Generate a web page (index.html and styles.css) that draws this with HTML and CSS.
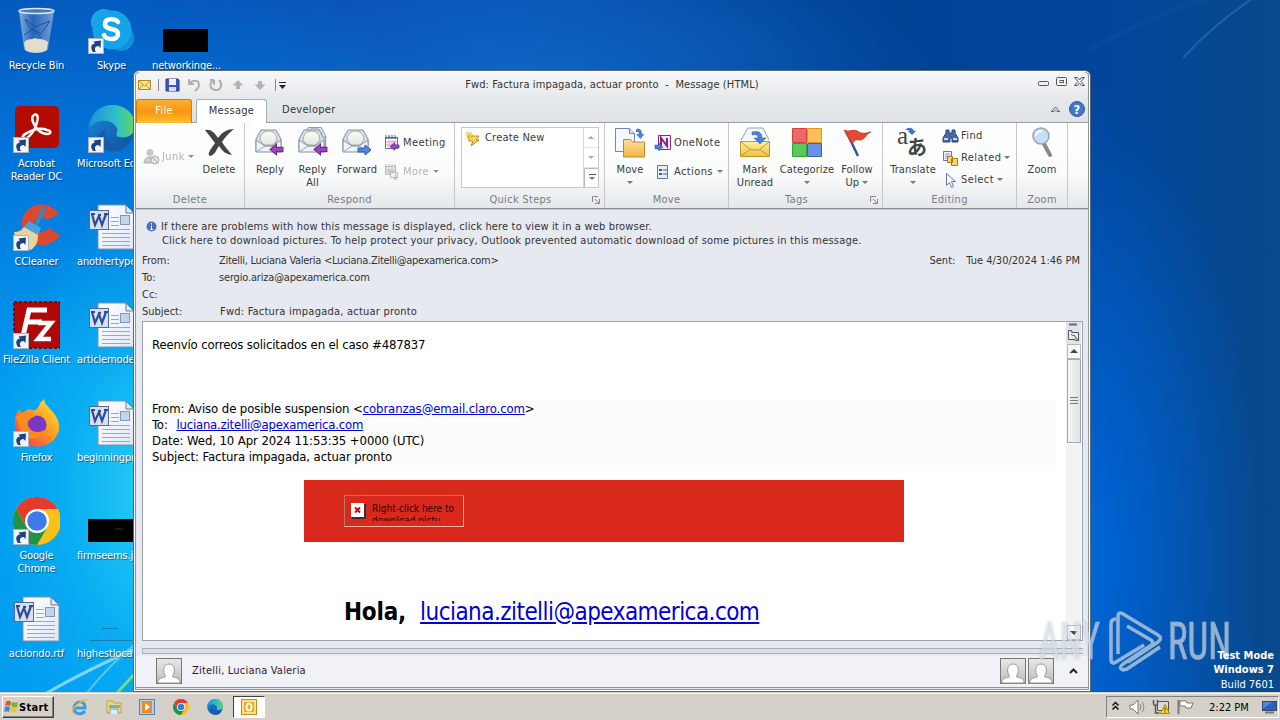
FILE: index.html
```html
<!DOCTYPE html>
<html lang="en">
<head>
  <meta charset="UTF-8" />
  <meta name="viewport" content="width=device-width, initial-scale=1.0"/>
  <title>Fwd: Factura impagada, actuar pronto - Message (HTML)</title>
  <link rel="stylesheet" href="styles.css">
</head>
<body>

  <!-- Shared icons -->
  <svg class="defs" width="0" height="0">
    <defs>
      <linearGradient id="g-env" x1="0" y1="0" x2="0" y2="1"><stop offset="0" stop-color="#fffdf0"/><stop offset="1" stop-color="#dfe6ea"/></linearGradient>
      <linearGradient id="g-gold" x1="0" y1="0" x2="0" y2="1"><stop offset="0" stop-color="#fff0a0"/><stop offset="1" stop-color="#f0c040"/></linearGradient>
      <linearGradient id="g-folder" x1="0" y1="0" x2="0" y2="1"><stop offset="0" stop-color="#ffe0a0"/><stop offset="1" stop-color="#f2b440"/></linearGradient>
      <linearGradient id="g-edge" x1="0" y1="0" x2="1" y2="0"><stop offset="0" stop-color="#1f8fe0"/><stop offset=".6" stop-color="#2fc0c8"/><stop offset="1" stop-color="#5fd860"/></linearGradient>
      <linearGradient id="g-edge2" x1="0" y1="0" x2="1" y2="1"><stop offset="0" stop-color="#1a88d8"/><stop offset="1" stop-color="#10509c"/></linearGradient>
      <linearGradient id="g-fox" x1="1" y1="0" x2="0" y2="1"><stop offset="0" stop-color="#fff040"/><stop offset=".45" stop-color="#ff9a20"/><stop offset="1" stop-color="#f02858"/></linearGradient>
      <linearGradient id="g-bin" x1="0" y1="0" x2="1" y2="0"><stop offset="0" stop-color="#9fc0e4"/><stop offset=".4" stop-color="#2f66b8"/><stop offset="1" stop-color="#8fb0dc"/></linearGradient>
      <linearGradient id="g-page" x1="0" y1="0" x2="1" y2="1"><stop offset="0" stop-color="#fff"/><stop offset="1" stop-color="#dfe8f8"/></linearGradient>
      <linearGradient id="g-person" x1="0" y1="0" x2="0" y2="1"><stop offset="0" stop-color="#e8e8e8"/><stop offset="1" stop-color="#bcbcbc"/></linearGradient>
      <symbol id="shortcut" viewBox="0 0 16 16">
        <rect x=".5" y=".5" width="15" height="15" fill="#f2f5f8" stroke="#a8b4c0"/>
        <path d="M5 14C2 10 3 6 7 5.500L5.500 3.500 13 2.500 12.500 10 10.500 8C7 8 6 11 8 14Z" fill="#1c4480"/>
      </symbol>
      <symbol id="word" viewBox="0 0 48 48">
        <path d="M11 2h28l8 8v36H11z" fill="url(#g-page)" stroke="#8090b0"/>
        <path d="M39 2v8h8z" fill="#dfe8f4" stroke="#6078a8"/>
        <path d="M24 14.500h8M24 18.500h8M24 22.500h8M15 26.500h28M15 30.500h28M15 34.500h28M15 38.500h28M15 42.500h28" stroke="#8fa8d8"/>
        <rect x="33.500" y="12.500" width="9" height="9" fill="#c4d4e8" stroke="#8098c0"/>
        <rect x="2.500" y="7.500" width="19" height="19" fill="#d8e0f0" stroke="#4f68a8"/>
        <path d="M5 11l3 11 4-9 3 9 4-11M4 11h4M17 11h4M11 12h3" fill="none" stroke="#2c4c98" stroke-width="2.200"/>
      </symbol>
      <symbol id="chrome" viewBox="0 0 48 48">
        <circle cx="24" cy="24" r="24" fill="#fbc116"/>
        <path d="M3.200 12A24 24 0 0 1 44.800 12H24L14 30z" fill="#e33b2e"/>
        <path d="M3.200 12A24 24 0 0 0 24 48L34.500 30H13.600z" fill="#229342"/>
        <circle cx="24" cy="24" r="12" fill="#fff"/>
        <circle cx="24" cy="24" r="9.800" fill="#3c7be8"/>
      </symbol>
      <symbol id="edge" viewBox="0 0 48 48">
        <circle cx="24" cy="24" r="23.500" fill="url(#g-edge2)"/>
        <path d="M1 23C3 8 12 0 25 0c14 0 23 10 23 21 0 9-7 13-15 12-5-1-4-3-3-7C30 18 14 10 1 23z" fill="url(#g-edge)"/>
        <path d="M18 25c-2 12 9 22 24 14-7 10-20 11-28 4-7-8-4-16 4-18z" fill="#175ca8"/>
      </symbol>
      <symbol id="envelope" viewBox="0 0 32 32">
        <path d="M2 13L7 4h15l5 9v12H2z" fill="#d8e2ee" stroke="#7f90a8"/>
        <path d="M6 14c0-12 17-12 17 0l-4 5h-9z" fill="url(#g-env)" stroke="#a8a890"/>
        <path d="M2 14l9 6h7l9-6v12H2z" fill="#edf3f7" stroke="#7f90a8"/>
        <path d="M2 26l9-6h7l9 6" fill="none" stroke="#98a8b8"/>
      </symbol>
      <symbol id="arrow-left" viewBox="0 0 14 12"><path d="M1 6l6-5v3h6v4H7v3z" fill="#9a48b8" stroke="#70288c"/></symbol>
      <symbol id="person" viewBox="0 0 26 26">
        <rect x=".5" y=".5" width="25" height="25" fill="url(#g-person)" stroke="#777"/>
        <path d="M2 25c0-5 3-5 7-6 1-1 0-2-1-4-3-12 13-12 10 0-1 2-2 3-1 4 4 1 7 1 7 6z" fill="#fff" stroke="#999"/>
      </symbol>
      <symbol id="launcher" viewBox="0 0 8 8"><path d="M.5 6V.5H6M3 3l4 4M7.500 3v4.500H3" fill="none" stroke="#888"/></symbol>
    </defs>
  </svg>

  <div class="screen">

    <!-- Wallpaper light streaks -->
    <svg class="wallpaper" width="1280" height="694">
      <g fill="none" stroke-linecap="round">
        <path d="M45 694Q90 668 140 647" stroke="#a8e4fa" stroke-width="3" opacity=".75"/>
        <path d="M86 694Q110 664 140 640" stroke="#8fdcf8" stroke-width="2" opacity=".6"/>
        <path d="M116 694L140 668" stroke="#90e860" stroke-width="3" opacity=".8"/>
        <path d="M1184 57Q1210 28 1250 0" stroke="#4f94d4" stroke-width="2" opacity=".35"/>
        <path d="M1090 50Q1150 15 1205 0" stroke="#4f94d4" stroke-width="5" opacity=".05"/>
      </g>
    </svg>

    <!-- Desktop icons -->
    <div class="desktop">
      <div class="shortcut">
        <svg width="48" height="48"><path d="M7 4l5 38c6 4 18 4 24 0l6-38z" fill="url(#g-bin)" opacity=".8"/><path d="M12 36c2-5 8-3 11-5 4 2 9 0 13 4l-1 7c-6 4-16 4-22 0z" fill="#e4dccc"/><path d="M13 12l10 8 15-6-9 13-12-7zM12 28l9-6 8 9" fill="none" stroke="#214f9c"/><ellipse cx="24.500" cy="4" rx="17.500" ry="2.500" fill="#4878b8" stroke="#dce4ec" stroke-width="1.500"/><path d="M13 42c6 4 16 4 22 0" fill="none" stroke="#d8d8d8" stroke-width="2"/></svg>
        <span>Recycle Bin</span>
      </div>
      <div class="shortcut">
        <svg width="48" height="48"><rect x="3" y="1" width="44" height="42" rx="5" fill="#b30b00"/><path d="M22 10c3-2 5 2 3 7-1 7-7 15-12 17-4 1-3-4 2-6 7-4 15-5 20-3 5 1 4 4 0 4-6 0-12-6-14-12-1-3-1-6 1-7z" fill="none" stroke="#fff" stroke-width="2.500"/><use href="#shortcut" x="1" y="32" width="16" height="16"/></svg>
        <span>Acrobat<br>Reader DC</span>
      </div>
      <div class="shortcut">
        <svg width="48" height="48"><path d="M47 11C36-6 9 1 10 22c1 22 27 27 38 10l-11-7c-8 8-16 3-15-4 1-8 9-9 13-4z" fill="#dc4930"/><path d="M32 5l-8 18" stroke="#3688c4" stroke-width="4"/><path d="M17 18l12 7-3 8-15-8z" fill="#4ba0d8"/><path d="M12 24l14 8c0 8-2 11-7 15C9 44 3 36 2 29c5 0 7-1 10-5z" fill="#ecd29c"/><use href="#shortcut" x="1" y="32" width="16" height="16"/></svg>
        <span>CCleaner</span>
      </div>
      <div class="shortcut">
        <svg width="48" height="48"><rect x="2" y="1" width="46" height="46" fill="#b00808" stroke="#780808" stroke-width="2" stroke-dasharray="3 2"/><path d="M11 35l6-26h18M14 21h16" fill="none" stroke="#fff" stroke-width="5"/><path d="M26 22h13L26 38h13" fill="none" stroke="#fff" stroke-width="4.500"/><use href="#shortcut" x="1" y="32" width="16" height="16"/></svg>
        <span>FileZilla Client</span>
      </div>
      <div class="shortcut">
        <svg width="48" height="48"><path d="M3 22c0-6 2-9 5-12l1 4 8-4c5 3 9 1 11-6l4-4c1 6 4 7 7 11 10 10 9 20 6 25-7 14-27 15-36 5C4 36 2 30 3 22z" fill="url(#g-fox)"/><circle cx="25" cy="26" r="9.500" fill="#7a38c4"/><path d="M4 18c7-5 15-4 19 0-5 0-4 3-8 4 1 11 10 14 20 8-5 13-23 13-27 0z" fill="#ff8a20"/><use href="#shortcut" x="1" y="32" width="16" height="16"/></svg>
        <span>Firefox</span>
      </div>
      <div class="shortcut">
        <svg width="48" height="48"><use href="#chrome" x="1" y="0" width="48" height="48"/><use href="#shortcut" x="1" y="32" width="16" height="16"/></svg>
        <span>Google<br>Chrome</span>
      </div>
      <div class="shortcut">
        <svg width="48" height="48"><use href="#word" width="48" height="48"/></svg>
        <span>actiondo.rtf</span>
      </div>

      <div class="shortcut">
        <svg width="48" height="48"><circle cx="17" cy="15" r="13" fill="#1fa4e4"/><circle cx="34" cy="31" r="13" fill="#1090d8"/><circle cx="25" cy="23" r="19.500" fill="#14a5e8"/><path d="M31 15c-3-4-13-4-13 2 0 7 13 3 13 10 0 7-12 6-14 1" fill="none" stroke="#fff" stroke-width="4.500" stroke-linecap="round"/><use href="#shortcut" x="1" y="31" width="16" height="16"/></svg>
        <span>Skype</span>
      </div>
      <div class="shortcut left">
        <svg width="48" height="48"><use href="#edge" x="1" y="0" width="47" height="47"/><use href="#shortcut" x="1" y="32" width="16" height="16"/></svg>
        <span>Microsoft Edge</span>
      </div>
      <div class="shortcut left">
        <svg width="48" height="48"><use href="#word" width="48" height="48"/></svg>
        <span>anothertype...</span>
      </div>
      <div class="shortcut left">
        <svg width="48" height="48"><use href="#word" width="48" height="48"/></svg>
        <span>articlemode...</span>
      </div>
      <div class="shortcut left">
        <svg width="48" height="48"><use href="#word" width="48" height="48"/></svg>
        <span>beginningpr...</span>
      </div>
      <div class="shortcut left">
        <svg width="48" height="48"><path d="M1 22h46v23H1z"/><path d="M28 32h8" stroke="#333"/></svg>
        <span>firmseems.jpg</span>
      </div>
      <div class="shortcut left">
        <svg width="48" height="48"><path d="M3 45.500h44M15 33.500h16" stroke="#1c6c94" opacity=".7"/></svg>
        <span>highestlocal...</span>
      </div>

      <div class="shortcut">
        <svg width="48" height="48"><path d="M1 22h45v23H1z"/></svg>
        <span>networkinge...</span>
      </div>
    </div>

    <div class="build">
      <b>Test Mode</b>
      <b>Windows 7</b>
      <span>Build 7601</span>
    </div>

    <!-- Message window -->
    <div class="window">
      <div class="titlebar">
        <div class="quick-access">
          <svg width="150" height="18">
            <path d="M2.500 5.500h12v9h-12z" fill="#fbe48c" stroke="#b08828"/><path d="M3 6l5.500 5L14 6M3 14l4-4M14 14l-4-4" fill="none" stroke="#c09830"/>
            <path d="M22.500 4v12" stroke="#888"/>
            <path d="M30 4h12l1 1v11H30z" fill="#3f58b8" stroke="#283c90"/><path d="M33 4h7v6h-7z" fill="#eef2ff"/><path d="M33 12h7v4h-7z" fill="#d8dce8"/>
            <path d="M53 4v5h5M53 9c4-5 10-4 10 1 0 3-2 4-4 6" fill="none" stroke="#b0b0b0" stroke-width="2"/>
            <path d="M77 5c-5 5-2 10 3 10s7-6 3-10M78 5h-4M78 5v5" fill="none" stroke="#b0b0b0" stroke-width="2"/>
            <path d="M102 5l5.500 5.500H104V14h-4v-3.500h-3.500z" fill="#b4b4b4"/><path d="M124 15l5.500-5.500H126V6h-4v3.500h-3.500z" fill="#b4b4b4"/>
            <path d="M139.500 4v12" stroke="#888"/><path d="M143 7.500h7" stroke="#222"/><path d="M143 10h7l-3.500 4z" fill="#222"/>
          </svg>
        </div>
        <div class="title">Fwd: Factura impagada, actuar pronto&nbsp; -&nbsp; Message (HTML)</div>
        <div class="window-buttons">
          <svg width="50" height="14" fill="none" stroke="#555">
            <rect x="1.500" y="6.500" width="10" height="4" rx="1"/>
            <rect x="19.500" y="2.500" width="10" height="8" rx="1"/><rect x="23" y="5.500" width="3.500" height="2"/>
            <path d="M37.500 2.500h3l2 2.500 2-2.500h3l-3.500 4 3.500 4h-3l-2-2.500-2 2.500h-3l3.500-4z"/>
          </svg>
        </div>
      </div>

      <div class="tabs">
        <div class="tab file">File</div>
        <div class="tab active">Message</div>
        <div class="tab">Developer</div>
        <svg class="help" width="40" height="20">
          <path d="M6.500 12.500L10.500 8l4 4.500h-2L10.500 11l-2 1.500z" fill="#fff" stroke="#555"/>
          <circle cx="32" cy="10" r="7.500" fill="#4676c8" stroke="#2f58a4"/>
          <text x="32" y="15" text-anchor="middle" class="help-mark">?</text>
        </svg>
      </div>

      <div class="ribbon">
        <div class="group delete">
          <div class="group-body">
            <div class="small-col">
              <div class="small disabled"><svg width="18" height="17"><circle cx="7" cy="4.500" r="3.500" fill="#bbb"/><path d="M1 15c0-8 12-8 12 0z" fill="#c4c4c4" stroke="#999"/><circle cx="12" cy="12" r="4" fill="#ddd" stroke="#999"/><path d="M9 9l6 6" stroke="#999"/></svg>Junk<i class="arrow"></i></div>
            </div>
            <div class="big">
              <svg width="32" height="32"><path d="M2 4c6-1 9 2 13 8 4-6 10-9 16-9-5 4-9 8-12 13 3 5 6 8 10 13-6-1-9-3-13-9-3 4-4 9-9 10-4-2 2-8 5-13C8 12 6 9 2 4z" fill="#444"/></svg>
              <span>Delete</span>
            </div>
          </div>
          <div class="group-label">Delete</div>
        </div>

        <div class="group respond">
          <div class="group-body">
            <div class="big">
              <svg width="32" height="32"><use href="#envelope" width="32" height="32"/><use href="#arrow-left" x="15" y="17" width="15" height="13"/></svg>
              <span>Reply</span>
            </div>
            <div class="big">
              <svg width="32" height="32"><use href="#envelope" x="5" y="-2" width="28" height="28"/><use href="#envelope" width="32" height="32"/><use href="#arrow-left" x="16" y="17" width="15" height="13"/></svg>
              <span>Reply<br>All</span>
            </div>
            <div class="big">
              <svg width="32" height="32"><use href="#envelope" width="32" height="32"/><path d="M30 24l-6-5v3h-7v4h7v3z" fill="#4c88e0" stroke="#285cb0"/></svg>
              <span>Forward</span>
            </div>
            <div class="small-col">
              <div class="small"><svg width="18" height="18"><path d="M2.500 3.500h12v11h-12z" fill="#fff" stroke="#5570b8"/><path d="M2 4h13M3 1v4M6 1v4M9 1v4M12 1v4" stroke="#4060a8"/><path d="M3 8h11M3 11h11M6 6v8M9 6v8M12 6v8" stroke="#d8a0b8"/><use href="#arrow-left" x="6" y="8" width="11" height="9"/></svg>Meeting</div>
              <div class="small disabled"><svg width="18" height="18"><path d="M2.500 3.500h10v8h-10z" fill="#eee" stroke="#aaa"/><path d="M3 1v4M6 1v4M9 1v4M12 1v4M3 7h9M3 9h9M6 5v7M9 5v7" stroke="#aaa"/><path d="M7.500 9.500h7v5h-7zM12.500 11v6M9.500 14l3 3 3-3" fill="#eee" stroke="#aaa"/></svg>More<i class="arrow"></i></div>
            </div>
          </div>
          <div class="group-label">Respond</div>
        </div>

        <div class="group quick-steps">
          <div class="group-body">
            <div class="gallery">
              <div class="gallery-item"><svg width="16" height="16"><path d="M3 5h11l-3 4h3l-8 6 2-5H4z" fill="#f8d860" stroke="#b88820"/><path d="M4 0v8M0 4h8M1 1l6 6M7 1L1 7" stroke="#f0c020"/></svg>Create New</div>
              <div class="gallery-scroll"><div><i class="arrow up"></i></div><div><i class="arrow dim"></i></div><div class="more"><i class="arrow bar"></i></div></div>
            </div>
          </div>
          <div class="group-label">Quick Steps<svg class="launch" width="8" height="8"><use href="#launcher" width="8" height="8"/></svg></div>
        </div>

        <div class="group move">
          <div class="group-body">
            <div class="big">
              <svg width="32" height="32"><path d="M1.500 2.500h14l5 5v18h-19z" fill="#f4f8ff" stroke="#7088b8"/><path d="M15.500 2.500v5h5" fill="#d8e4f4" stroke="#7088b8"/><path d="M9.500 13.500h7l2 2.500h12v15h-21z" fill="url(#g-folder)" stroke="#c08830"/><path d="M22 3c5-1 6 2 6 5h2.500L26.500 13 22 8h3c0-2-1-2-3-2z" fill="#4c80d8"/></svg>
              <span>Move<br><i class="arrow"></i></span>
            </div>
            <div class="small-col">
              <div class="small"><svg width="18" height="18"><path d="M4.500 1.500h12v14h-12z" fill="#f4e8f4" stroke="#84288c"/><path d="M7 12V4l6 8V4" fill="none" stroke="#80287c" stroke-width="2"/><path d="M1 11h4V9l4 4-4 4v-2H1z" fill="#4c80d8" stroke="#2c58a8" stroke-width=".5"/></svg>OneNote</div>
              <div class="small"><svg width="18" height="18"><path d="M3.500 2.500h10v13h-10z" fill="#e8f0fa" stroke="#5878a8"/><path d="M5 6h3v2H5zM5 10h3v2H5z" fill="#405888"/><path d="M9 7h4M9 11h4" stroke="#405888"/></svg>Actions<i class="arrow"></i></div>
            </div>
          </div>
          <div class="group-label">Move</div>
        </div>

        <div class="group tags">
          <div class="group-body">
            <div class="big">
              <svg width="32" height="32"><path d="M2 14L9 2h15l6 12" fill="#f4f8fc" stroke="#90a0b8"/><path d="M1.500 15.500h29v15h-29z" fill="url(#g-gold)" stroke="#c09828"/><path d="M2 16l10 8h8l10-8M2 30l10-7M30 30l-10-7" fill="none" stroke="#c09828"/><path d="M13 6c8-2 10 2 10 6h4l-6 6-6-6h4c0-3-2-4-6-3z" fill="#4c80d8" stroke="#2c58a8" stroke-width=".5"/></svg>
              <span>Mark<br>Unread</span>
            </div>
            <div class="big">
              <svg width="32" height="32"><path d="M1.500 2.500h14v14h-14z" fill="#ee6868" stroke="#d04040"/><path d="M16.500 2.500h14v14h-14z" fill="#fcc058" stroke="#dc9828"/><path d="M1.500 17.500h14v13h-14z" fill="#5cc85c" stroke="#38a038"/><path d="M16.500 17.500h14v13h-14z" fill="#6890e4" stroke="#3c60b8"/></svg>
              <span>Categorize<br><i class="arrow"></i></span>
            </div>
            <div class="big">
              <svg width="32" height="32"><path d="M5 5l12 25" stroke="#305898" stroke-width="2.500"/><path d="M3 4c6 3 9-2 15 2 3 2 7 1 12 0-6 2-6 9-12 8-4-1-5 1-7 4z" fill="#e84830" stroke="#b82c18" stroke-width=".7"/></svg>
              <span>Follow<br>Up <i class="arrow"></i></span>
            </div>
          </div>
          <div class="group-label">Tags<svg class="launch" width="8" height="8"><use href="#launcher" width="8" height="8"/></svg></div>
        </div>

        <div class="group editing">
          <div class="group-body">
            <div class="big">
              <svg class="translate" width="34" height="32"><text x="1" y="18" class="tr-latin">a</text><text x="11" y="29" class="tr-kana">あ</text><path d="M9 4c4-4 8-2 9 1h2l-4 4-4-4h2c-1-1-3-1-5-1z" fill="#3c70c8"/></svg>
              <span>Translate<br><i class="arrow"></i></span>
            </div>
            <div class="small-col three">
              <div class="small"><svg width="18" height="16"><path d="M4 2h3v3h3V2h3v3l3 5v4h-6v-4H8v4H1v-4l3-5z" fill="#4468a8" stroke="#284878"/><path d="M2 11h4M11 11h4" stroke="#c8d8f0" stroke-width="2"/></svg>Find</div>
              <div class="small"><svg width="18" height="16"><path d="M1.500 1.500h8v9h-8z" fill="#eef4fc" stroke="#6078a8"/><path d="M3 4h5M3 6h5M3 8h5" stroke="#8098c8"/><path d="M5.500 6.500h5v6h-5zM9.500 8.500h6v7h-6z" fill="#fcd468" stroke="#a87c18"/></svg>Related<i class="arrow"></i></div>
              <div class="small"><svg width="18" height="16"><path d="M4.500 1.500v12l3-3 2 5 2-1-2-5h4z" fill="#fff" stroke="#6078a8"/></svg>Select<i class="arrow"></i></div>
            </div>
          </div>
          <div class="group-label">Editing</div>
        </div>

        <div class="group zoom">
          <div class="group-body">
            <div class="big">
              <svg width="32" height="32"><path d="M18 18l6 11" stroke="#888" stroke-width="4" stroke-linecap="round"/><circle cx="15" cy="10" r="8" fill="#c4e0f8" stroke="#98a4b0" stroke-width="1.500"/><path d="M10 10c0-4 3-5 6-5" stroke="#fff" stroke-width="2" fill="none"/></svg>
              <span>Zoom</span>
            </div>
          </div>
          <div class="group-label">Zoom</div>
        </div>
      </div>

      <!-- Message header -->
      <div class="header">
        <div class="info">
          <svg width="11" height="11"><circle cx="5.500" cy="5.500" r="5" fill="#4a72bc"/><path d="M5.500 2v1.500M5.500 4.500v4M4 8.500h3" stroke="#fff"/></svg>
          <div class="info-text">
            <p class="info-1">If there are problems with how this message is displayed, click here to view it in a web browser.</p>
            <p class="info-2">Click here to download pictures. To help protect your privacy, Outlook prevented automatic download of some pictures in this message.</p>
          </div>
        </div>
        <div class="field"><label>From:</label><span class="from">Zitelli, Luciana Valeria &lt;Luciana.Zitelli@apexamerica.com&gt;</span><span class="sent">Sent:</span><span class="date">Tue 4/30/2024 1:46 PM</span></div>
        <div class="field"><label>To:</label><span class="to">sergio.ariza@apexamerica.com</span></div>
        <div class="field"><label>Cc:</label></div>
        <div class="field"><label>Subject:</label><span class="subject">Fwd: Factura impagada, actuar pronto</span></div>
      </div>

      <!-- Message body -->
      <div class="message">
        <div class="mail">
          <p class="intro">Reenvío correos solicitados en el caso #487837</p>
          <div class="quoted">
            <p>From: Aviso de posible suspension &lt;<a href="#">cobranzas@email.claro.com</a>&gt;</p>
            <p class="to-line">To: <a href="#">luciana.zitelli@apexamerica.com</a></p>
            <p>Date: Wed, 10 Apr 2024 11:53:35 +0000 (UTC)</p>
            <p>Subject: Factura impagada, actuar pronto</p>
          </div>
          <div class="banner">
            <div class="blocked">
              <svg width="15" height="16"><path d="M1 1h14v15H1z" fill="#333"/><path d="M0 0h13v14H0z" fill="#fff"/><path d="M4 4.500l5 5M9 4.500l-5 5" stroke="#c00" stroke-width="1.800"/></svg>
              <p>Right-click here to<br>download pictu...</p>
            </div>
          </div>
          <div class="hello"><b>Hola,</b><a href="#">luciana.zitelli@apexamerica.com</a></div>
        </div>
        <div class="scrollbar">
          <svg width="15" height="22"><path d="M3 2.500h8" stroke="#667" stroke-width="2"/><path d="M2.500 8.500h3l1 2h6v8h-3l-1-1h-6zM3.500 8l3 3M8 18.500l2-3 2 3M5 12.500l5 2" fill="#eee" stroke="#555"/></svg>
          <div class="sb-button"><i class="arrow up"></i></div>
          <div class="thumb"><i></i><i></i><i></i></div>
          <div class="sb-button bottom"><i class="arrow"></i></div>
        </div>
      </div>

      <div class="splitter"></div>

      <div class="people">
        <svg width="26" height="26"><use href="#person" width="26" height="26"/></svg>
        <span>Zitelli, Luciana Valeria</span>
        <div class="people-right">
          <svg width="26" height="26"><use href="#person" width="26" height="26"/></svg>
          <svg width="26" height="26"><use href="#person" width="26" height="26"/></svg>
          <svg class="expand" width="9" height="6"><path d="M1 5l3.500-3.500L8 5" fill="none" stroke="#222" stroke-width="2"/></svg>
        </div>
      </div>
    </div>

    <!-- Watermark -->
    <svg class="watermark" width="200" height="70">
      <g class="mark-text">
        <text x="2" y="52" textLength="61" lengthAdjust="spacingAndGlyphs">ANY</text>
        <text x="131" y="52" textLength="63" lengthAdjust="spacingAndGlyphs">RUN</text>
      </g>
      <path d="M79 12q-5 0-5 5v35q0 6 5 3l28-17M81 47V10q0-6 5-3l35 21q5 3 0 7l-30 20M90 19l24 14q4 3-1 6l-27 18q-5 4 0 6l4-1 33-22" fill="none" stroke="#e4eef8" stroke-width="3.500" stroke-linejoin="round" opacity=".6"/>
    </svg>

    <!-- Taskbar -->
    <div class="taskbar">
      <div class="start">
        <svg width="16" height="16"><path d="M3 3c2-2 4-1 5 0L7 7C5 6 3 6 2 7z" fill="#e85020"/><path d="M9 3c2 1 4 1 6 0l-1 5c-2 1-4 0-6-1z" fill="#70b830"/><path d="M2 8c2-1 3-1 5 0l-1 5c-2-1-4-1-5 0z" fill="#3888e0"/><path d="M8 8c2 1 4 1 6 0l-1 5c-3 1-4 0-6-1z" fill="#f8c020"/></svg>
        <b>Start</b>
      </div>
      <div class="launch-icons">
        <svg width="18" height="18"><path d="M3 10h11c1-8-10-8-11 0 0 7 8 7 11 3" fill="none" stroke="#3c9ce0" stroke-width="3"/><path d="M2 15c-3-4 10-15 15-13" fill="none" stroke="#e8c040" stroke-width="1.500"/></svg>
        <svg width="18" height="18"><path d="M2 3h6l1 2h7v10H2z" fill="#f4d878" stroke="#c8a040"/><path d="M4 7h11v3H4z" fill="#70b0d8"/><path d="M5 16v-5h8v5" fill="#d8ecf8" stroke="#70a8d0"/></svg>
        <svg width="18" height="18"><rect x="1.500" y="1.500" width="15" height="15" fill="#a8d0f0" stroke="#4888c0"/><rect x="4" y="3" width="10" height="12" fill="#f08820"/><path d="M7 5v8l5-4z" fill="#fff"/></svg>
        <svg width="18" height="18"><use href="#chrome" x="1" y="1" width="16" height="16"/></svg>
        <svg width="18" height="18"><use href="#edge" x="1" y="1" width="16" height="16"/></svg>
      </div>
      <div class="task-active">
        <svg width="18" height="18"><rect x="1.500" y="1.500" width="15" height="15" fill="#fbe08c" stroke="#c88c18"/><rect x="4" y="4" width="10" height="10" fill="#e8a828"/><ellipse cx="9" cy="9" rx="2.500" ry="3.500" fill="none" stroke="#fff8d8" stroke-width="2"/></svg>
      </div>
      <div class="tray">
        <svg width="92" height="20">
          <path d="M5.500 8.500l3-3 3 3M5.500 12.500l3-3 3 3" fill="none" stroke="#111" stroke-width="1.500"/>
          <path d="M23 8h3l5-5v14l-5-5h-3z" fill="#fff" stroke="#777"/><path d="M33 7q2 3 0 6M35.500 5q3 5 0 10" fill="none" stroke="#888"/>
          <path d="M50.500 4.500h11v9h-11z" fill="#d8dce0" stroke="#555"/><path d="M46.500 3v4q2 3 4 0V3M48.500 9v7h4" fill="none" stroke="#555" stroke-width="1.500"/><path d="M53.500 16.500l4.500-9 4.500 9z" fill="#fcd820" stroke="#a88810"/><path d="M58 10.500v3M58 14.500v1" stroke="#222"/>
          <path d="M71.500 3v14" stroke="#777" stroke-width="2"/><path d="M73 4h6l1 2h6l-2 5h-5l-1-2h-5z" fill="#fff" stroke="#777"/>
        </svg>
        <span>2:22 PM</span>
        <svg class="monitor" width="16" height="14"><rect x=".5" y="1.500" width="14" height="9" fill="#2860c0" stroke="#384860"/><path d="M1 9l9-7H1z" fill="#4c88e0"/><path d="M3 12.500h9" stroke="#778" stroke-width="2"/></svg>
      </div>
    </div>
  </div>

</body>
</html>
```

FILE: styles.css
```css
* {
  box-sizing: border-box;
  margin: 0;
  padding: 0;
}

body {
  font-family: "DejaVu Sans Condensed", "DejaVu Sans", Tahoma, sans-serif;
  font-stretch: condensed;
  font-size: 11px;
  line-height: 13px;
  color: #333;
  overflow: hidden;
}

svg {
  display: block;
  flex-shrink: 0;
}

.defs {
  position: absolute;
}

.screen {
  position: relative;
  width: 1280px;
  height: 720px;
  display: flex;
  flex-direction: column;
  overflow: hidden;
  background:
    radial-gradient(ellipse 190px 300px at 170px 490px, rgba(48, 214, 246, 0.95), rgba(20, 190, 245, 0.5) 55%, transparent),
    radial-gradient(ellipse 520px 640px at 60px 540px, #009cf0 25%, rgba(0, 128, 230, 0.8) 60%, transparent),
    radial-gradient(ellipse 420px 140px at 520px 80px, rgba(16, 110, 200, 0.75), transparent),
    radial-gradient(ellipse 190px 480px at 1070px 560px, rgba(0, 108, 226, 0.95), transparent),
    linear-gradient(90deg, #0648ac 0%, #0850b4 40%, #004294 70%, #00459c 85%, #084a8c 100%);
}

/* Desktop */
.wallpaper {
  position: absolute;
  top: 0;
  left: 0;
}

.desktop {
  position: relative;
  height: 693px;
  display: grid;
  grid-auto-flow: column;
  grid-template-rows: repeat(7, 98px);
  grid-auto-columns: 75px;
  justify-content: start;
  padding: 7px 0 0 0;
  margin-left: -1px;
}

.shortcut {
  display: flex;
  flex-direction: column;
  align-items: center;
  color: #fff;
  text-align: center;
  white-space: nowrap;
  letter-spacing: -0.15px;
  text-shadow: 1px 1px 1px rgba(0, 0, 0, 0.5);
}

.shortcut svg {
  margin-right: 2px;
}

.shortcut span {
  margin-top: 4px;
}

.shortcut.left span {
  align-self: flex-start;
  margin-left: 3px;
}

.build {
  position: absolute;
  right: 6px;
  bottom: 27px;
  display: flex;
  flex-direction: column;
  align-items: flex-end;
  line-height: 16px;
  color: #fff;
  z-index: 5;
}

.build b {
  line-height: 14px;
}

/* Window */
.window {
  position: absolute;
  left: 133px;
  top: 70px;
  width: 958px;
  height: 622px;
  display: flex;
  flex-direction: column;
  border: 1px solid #56687c;
  border-radius: 6px 6px 0 0;
  background: #e6e9f0;
  box-shadow: inset 0 0 0 1px #fff, inset 0 0 0 2px #8e96a0;
  padding: 1px 2px 3px 2px;
}

.titlebar {
  height: 27px;
  display: flex;
  border-radius: 5px 5px 0 0;
  background: linear-gradient(#f6f7f8, #e6e9ec);
}

.quick-access {
  width: 200px;
  padding: 3px 0 0 0;
}

.title {
  flex: 1;
  text-align: center;
  padding: 6px 149px 0 0;
  letter-spacing: 0.12px;
}

.window-buttons {
  width: 51px;
  padding-top: 3px;
}

.tabs {
  height: 24px;
  display: flex;
  background: linear-gradient(#e6e9ec, #dfe3e6);
  border-bottom: 1px solid #9aa0a8;
  letter-spacing: 0.3px;
}

.tab {
  height: 24px;
  line-height: 22px;
  padding: 0 15px;
}

.tab.file {
  width: 56px;
  text-align: center;
  padding: 0;
  color: #fff;
  border: 1px solid #d07c10;
  border-bottom: none;
  border-radius: 3px 3px 0 0;
  background: linear-gradient(#ffb030, #f89410 50%, #ffc030);
}

.tab.active {
  width: 71px;
  margin-left: 4px;
  padding: 0;
  text-align: center;
  background: #fff;
  border: 1px solid #a8aeb4;
  border-bottom: none;
  border-radius: 3px 3px 0 0;
}

.help {
  margin: 0 3px 0 auto;
}

.help-mark {
  font-size: 13px;
  font-weight: bold;
  fill: #fff;
}

/* Ribbon */
.ribbon {
  height: 86px;
  display: flex;
  background: linear-gradient(#fff, #fafbfb 60%, #e4e8eb);
  border-bottom: 1px solid #888e96;
  color: #3b3b3b;
}

.group {
  display: flex;
  flex-direction: column;
  border-right: 1px solid #c4c8cc;
}

.group.delete { width: 109px; }
.group.respond { width: 210px; }
.group.quick-steps { width: 150px; }
.group.move { width: 124px; }
.group.tags { width: 154px; }
.group.editing { width: 134px; }
.group.zoom { width: 51px; }

.group-body {
  height: 70px;
  display: flex;
  padding: 4px 3px 0 3px;
}

.group-label {
  position: relative;
  text-align: center;
  color: #777c82;
  letter-spacing: 0.3px;
}

.launch {
  position: absolute;
  right: 4px;
  top: 3px;
}

.quick-steps .group-label {
  padding-right: 18px;
}

.tags .group-label {
  padding-right: 18px;
}

.big {
  display: flex;
  flex-direction: column;
  align-items: center;
  text-align: center;
  white-space: nowrap;
  letter-spacing: 0.1px;
  margin-top: -1px;
}

.big span {
  margin-top: 5px;
}

.delete .small-col { width: 59px; padding: 21px 0 0 4px; }
.delete .big { width: 42px; }
.respond .big { width: 44px; }
.respond .big:nth-child(2) { width: 41px; }
.respond .big:nth-child(3) { width: 48px; }
.move .big { width: 44px; }
.tags .big { width: 46px; }
.tags .big:nth-child(2) { width: 58px; }
.tags .big:nth-child(3) { width: 42px; }
.editing .big { width: 54px; }
.zoom .big { width: 45px; }

.small-col {
  display: flex;
  flex-direction: column;
  gap: 11px;
  padding: 7px 0 0 2px;
}

.small-col.three {
  gap: 4px;
  padding: 0 0 0 2px;
}

.small {
  height: 18px;
  display: flex;
  align-items: center;
  gap: 2px;
  white-space: nowrap;
  letter-spacing: 0.4px;
}

.three .small,
.delete .small {
  gap: 1px;
}

.disabled {
  color: #a0a0a0;
  opacity: 0.8;
}

.arrow {
  display: inline-block;
  width: 0;
  height: 0;
  border: 3px solid transparent;
  border-top-color: #777;
  border-bottom: none;
  vertical-align: 2px;
}

.arrow.dim {
  border-top-color: #aaa;
}

.small .arrow {
  margin-left: 2px;
}

.arrow.up {
  border: 3px solid transparent;
  border-top: none;
  border-bottom-color: #aaa;
}

.gallery {
  width: 138px;
  height: 61px;
  margin: 0 0 0 3px;
  display: flex;
  background: #fff;
  border: 1px solid #c4c8cc;
}

.gallery-item {
  flex: 1;
  display: flex;
  align-items: flex-start;
  gap: 4px;
  padding: 3px 0 0 3px;
  white-space: nowrap;
  letter-spacing: 0.2px;
}

.gallery-scroll {
  width: 15px;
  border-left: 1px solid #d4d8dc;
}

.gallery-scroll div {
  height: 20px;
  display: flex;
  align-items: center;
  justify-content: center;
  border-bottom: 1px solid #e0e2e4;
}

.gallery-scroll .more {
  border: 1px solid #b8bcc0;
  border-width: 1px 0 0 1px;
}

.arrow.bar {
  position: relative;
}

.arrow.bar::before {
  content: "";
  position: absolute;
  left: -3px;
  top: -6px;
  width: 7px;
  height: 1px;
  background: #555;
}

/* Message header */
.header {
  height: 112px;
  padding: 11px 8px 0 6px;
  border-top: 1px solid #c4c8d0;
}

.info {
  display: flex;
  gap: 4px;
  padding-left: 4px;
  height: 31px;
}

.info-text {
  line-height: 14px;
  white-space: nowrap;
}

.info p {
  margin-top: -1px;
  letter-spacing: 0.165px;
}

.info .info-2 {
  margin: 0 0 0 1px;
  letter-spacing: 0.2px;
}

.field {
  height: 17px;
  line-height: 17px;
  display: flex;
  white-space: nowrap;
}

.field label {
  width: 77px;
}

.from {
  letter-spacing: -0.29px;
}

.to {
  letter-spacing: -0.18px;
}

.subject {
  margin-left: 1px;
  letter-spacing: 0.22px;
}

.sent {
  margin-left: auto;
}

.date {
  margin-left: 11px;
}

/* Body */
.message {
  width: 941px;
  height: 321px;
  margin-left: 6px;
  display: flex;
  background: #fff;
  border: 1px solid #9ca2ac;
  overflow: hidden;
}

.mail {
  width: 923px;
  padding: 15px 0 0 9px;
  font-size: 13px;
  line-height: 16px;
  color: #000;
}

.mail a {
  color: #0000d0;
}

.intro {
  margin-bottom: 48px;
  letter-spacing: -0.15px;
}

.quoted {
  width: 903px;
  background: #fbfbfb;
  letter-spacing: -0.09px;
}

.to-line a {
  margin-left: 5px;
  letter-spacing: -0.2px;
}

.banner {
  width: 600px;
  height: 62px;
  margin: 15px 0 0 152px;
  padding: 15px 40px;
  background: #d9291c;
}

.blocked {
  width: 120px;
  height: 32px;
  border: 1px solid #e8a898;
  border-color: #b87868 #e8b8a8 #e8b8a8 #b87868;
  padding: 7px 6px;
  display: flex;
  gap: 6px;
}

.blocked p {
  height: 18px;
  overflow: hidden;
  white-space: nowrap;
  font-size: 10px;
  line-height: 12px;
  color: #300;
}

.hello {
  display: flex;
  gap: 14px;
  margin: 55px 0 0 192px;
  font-size: 24px;
  line-height: 30px;
}

.hello b {
  letter-spacing: -0.2px;
}

.hello a {
  letter-spacing: -0.55px;
}

.scrollbar {
  width: 15px;
  display: flex;
  flex-direction: column;
  align-items: center;
  background: #f2f3f4;
}

.scrollbar > svg {
  background: #e0e3e9;
}

.sb-button {
  width: 14px;
  height: 15px;
  display: flex;
  align-items: center;
  justify-content: center;
  background: #f6f7f8;
  border: 1px solid #b4b8c0;
}

.sb-button .arrow {
  border-width: 4px;
  border-top-color: #445;
  border-bottom: none;
}

.sb-button .arrow.up {
  border-top: none;
  border-bottom: 4px solid #445;
}

.sb-button.bottom {
  margin-top: auto;
}

.thumb {
  width: 14px;
  height: 84px;
  display: flex;
  flex-direction: column;
  align-items: center;
  justify-content: center;
  gap: 2px;
  background: linear-gradient(90deg, #f4f5f5, #e0e3e4);
  border: 1px solid #a4a8ae;
}

.thumb i {
  width: 8px;
  height: 1px;
  background: #777;
}

.splitter {
  width: 941px;
  height: 6px;
  margin: 7px 0 2px 6px;
  background: #dde0e8;
  border: 1px solid #a8aeb8;
  border-right: none;
}

.people {
  height: 32px;
  display: flex;
  align-items: center;
  gap: 10px;
  padding: 0 10px 2px 20px;
  background: #f0f2f5;
  color: #301838;
  border-bottom: 1px solid #8e96a0;
}

.people > span {
  letter-spacing: 0.2px;
}

.people-right {
  display: flex;
  align-items: center;
  gap: 2px;
  margin-left: auto;
}

.expand {
  margin-left: 13px;
}

/* Watermark */
.watermark {
  position: absolute;
  left: 1037px;
  top: 607px;
  z-index: 4;
  filter: drop-shadow(0 0 1px rgba(90, 100, 110, 0.5));
}

.mark-text {
  font-family: Roboto, sans-serif;
  font-size: 51px;
  fill: #e4eef8;
  stroke: #e4eef8;
  stroke-width: 0.7px;
  opacity: 0.6;
}

/* Taskbar */
.taskbar {
  position: relative;
  height: 27px;
  display: flex;
  align-items: center;
  background: #d5d0c8;
  border-top: 1px solid #f8f8f8;
  box-shadow: 0 -1px 0 #d5d0c8;
  color: #000;
}

.start {
  width: 52px;
  height: 22px;
  margin-left: 2px;
  display: flex;
  align-items: center;
  border: 1px solid #fff;
  border-color: #fff #404040 #404040 #fff;
  box-shadow: inset -1px -1px 0 #808080;
}

.start b {
  letter-spacing: 0.3px;
}

.launch-icons {
  display: flex;
  gap: 15.7px;
  margin-left: 17px;
}

.task-active {
  width: 32px;
  height: 22px;
  margin-left: 9px;
  display: flex;
  align-items: center;
  justify-content: center;
  background: #fff;
  border: 1px solid #808080;
  border-color: #404040 #fff #fff #404040;
}

.tray {
  width: 173px;
  height: 22px;
  margin: 0 1px 0 auto;
  display: flex;
  align-items: center;
  border: 1px solid #808080;
  border-color: #808080 #fff #fff #808080;
}

.tray span {
  margin-left: 10px;
}

.monitor {
  margin-left: auto;
}

.translate {
  overflow: visible;
}

.tr-latin {
  font-family: "Liberation Serif", serif;
  font-size: 25px;
  fill: #444;
}

.tr-kana {
  font-family: "Noto Sans CJK JP", sans-serif;
  font-weight: bold;
  font-size: 20px;
  fill: #444;
}
```
